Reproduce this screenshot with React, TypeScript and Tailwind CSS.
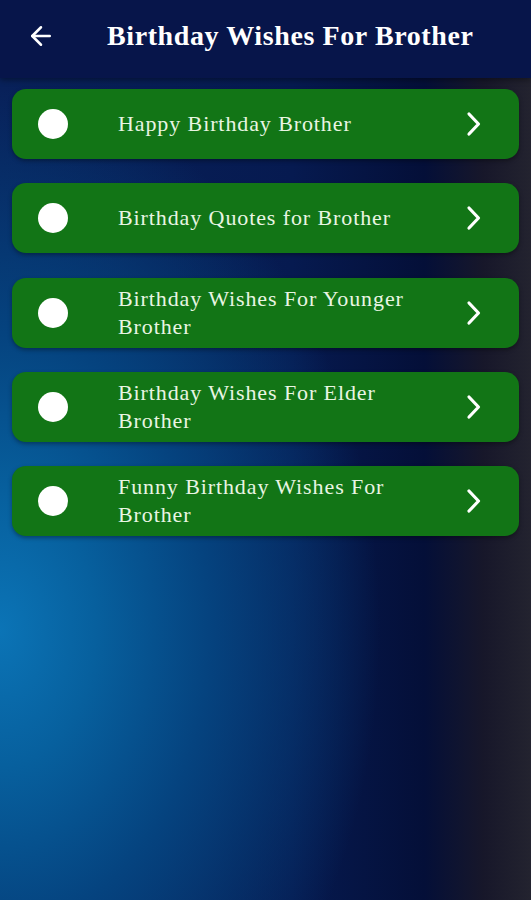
import { ArrowLeft } from "lucide-react";

const items = [
  "Happy Birthday Brother",
  "Birthday Quotes for Brother",
  "Birthday Wishes For Younger Brother",
  "Birthday Wishes For Elder Brother",
  "Funny Birthday Wishes For Brother",
];

function Chevron() {
  return (
    <svg width="18" height="26" viewBox="0 0 18 26" className="shrink-0">
      <polyline
        points="4,3 13.5,13 4,23"
        fill="none"
        stroke="white"
        strokeWidth="3.2"
        strokeLinecap="round"
        strokeLinejoin="round"
      />
    </svg>
  );
}

function ItemCard({ title }: { title: string }) {
  return (
    <div className="flex items-center h-[70px] rounded-[14px] bg-[#127516] shadow-[0_2px_4px_rgba(0,0,0,0.35)] pl-[26px] pr-[36px]">
      <span className="w-[30px] h-[30px] rounded-full bg-white shrink-0" />
      <p className="ml-[50px] w-[300px] text-[22px] leading-[28px] tracking-[0.9px] text-[#e9f5e3]">
        {title}
      </p>
      <span className="flex-1" />
      <Chevron />
    </div>
  );
}

export default function App() {
  return (
    <div
      className="w-[531px] h-[900px] overflow-hidden flex flex-col bg-[radial-gradient(ellipse_380px_540px_at_0%_70%,#0b74b6_0%,#07609e_25%,#05437f_55%,rgba(6,30,90,0)_100%),linear-gradient(to_right,#08215a_0%,#061a50_55%,#040f38_80%,#17172a_91%,#23232f_100%)]"
      style={{ fontFamily: '"Liberation Serif", "DejaVu Serif", serif' }}
    >
      <header className="h-[78px] shrink-0 bg-[#07154a] flex items-center pb-[6px] shadow-[0_2px_6px_rgba(0,0,0,0.4)]">
        <ArrowLeft className="ml-[26px] w-[30px] h-[30px] text-white" strokeWidth={2} />
        <h1 className="ml-[51px] text-[28px] font-bold tracking-[0.6px] text-white">
          Birthday Wishes For Brother
        </h1>
      </header>
      <div className="flex flex-col gap-[24.3px] px-3 pt-[11px]">
        {items.map((t) => (
          <ItemCard key={t} title={t} />
        ))}
      </div>
    </div>
  );
}
